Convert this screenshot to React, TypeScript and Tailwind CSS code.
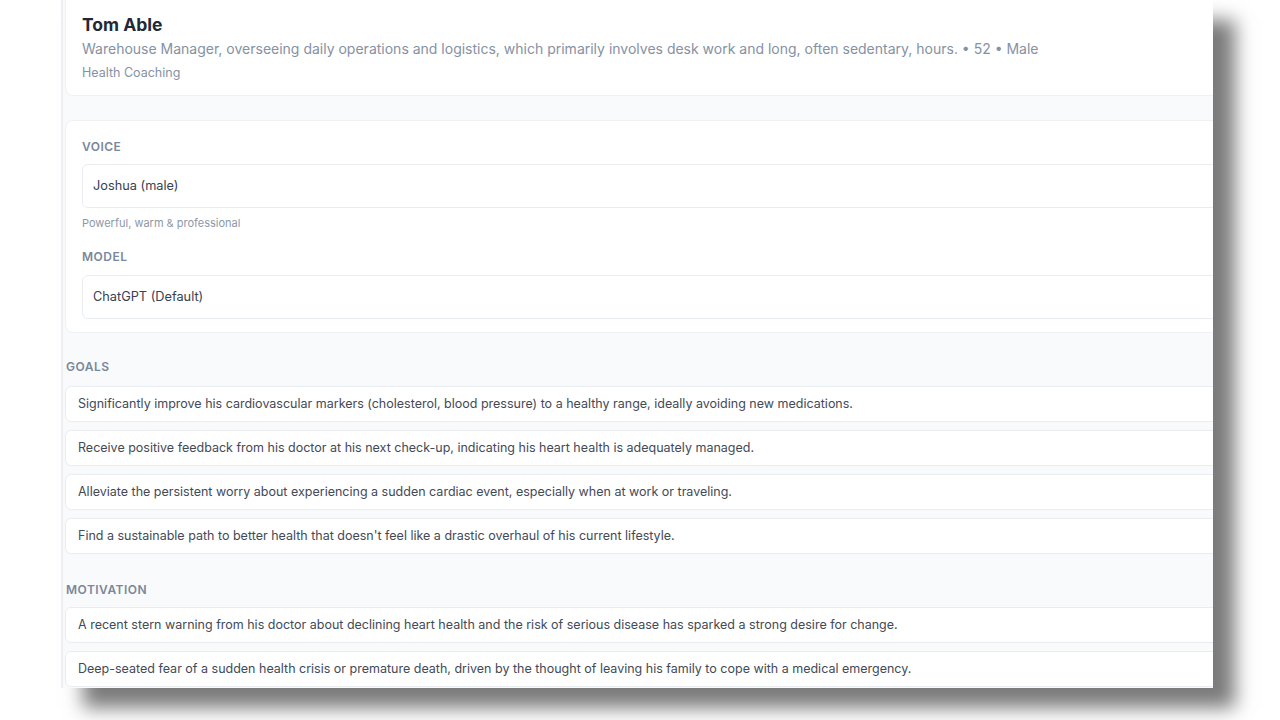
const goals = [
  "Significantly improve his cardiovascular markers (cholesterol, blood pressure) to a healthy range, ideally avoiding new medications.",
  "Receive positive feedback from his doctor at his next check-up, indicating his heart health is adequately managed.",
  "Alleviate the persistent worry about experiencing a sudden cardiac event, especially when at work or traveling.",
  "Find a sustainable path to better health that doesn't feel like a drastic overhaul of his current lifestyle.",
];

const motivation = [
  "A recent stern warning from his doctor about declining heart health and the risk of serious disease has sparked a strong desire for change.",
  "Deep-seated fear of a sudden health crisis or premature death, driven by the thought of leaving his family to cope with a medical emergency.",
];

const Label = ({ children, className = "" }: { children: React.ReactNode; className?: string }) => (
  <div className={`text-[12px] font-semibold uppercase leading-4 tracking-[0.04em] text-[#7a879c] ${className}`}>
    {children}
  </div>
);

const Field = ({ value, className = "" }: { value: string; className?: string }) => (
  <div className={`flex h-[44px] items-center rounded-md border border-[#e9edf2] bg-white px-[10px] text-[12.75px] text-[#374151] ${className}`}>
    {value}
  </div>
);

const Item = ({ text }: { text: string }) => (
  <div className="flex h-[36px] items-center rounded-md border border-[#e9edf2] bg-white px-3 text-[12.5px] text-[#434a57]">
    {text}
  </div>
);

export default function App() {
  return (
    <div className="h-screen w-full overflow-hidden bg-white font-['Inter','Liberation_Sans',sans-serif]">
      <div className="ml-[61px] h-[688px] w-[1152px] overflow-hidden border-l-2 border-[#eceef1] bg-[#f9fafb] shadow-[22px_20px_18px_rgba(0,0,0,0.52)]">
        <div className="w-[1200px] pl-[2px]">
          {/* persona header */}
          <div className="-mt-2 rounded-lg border border-[#eef0f3] bg-white px-4 pb-[14px] pt-[20px]">
            <h1 className="text-[17.5px] font-bold leading-6 text-[#1f2937]">Tom Able</h1>
            <p className="mt-0.5 text-[14px] leading-5 text-[#8591a4]">
              Warehouse Manager, overseeing daily operations and logistics, which primarily involves desk work and long, often sedentary, hours. • 52 • Male
            </p>
            <p className="mt-1.5 text-[12.5px] leading-4 text-[#8591a4]">Health Coaching</p>
          </div>

          {/* voice / model */}
          <div className="mt-6 rounded-lg border border-[#eef0f3] bg-white px-4 pb-[13px] pt-[18px]">
            <Label>Voice</Label>
            <Field value="Joshua (male)" className="mt-[9px]" />
            <p className="mt-2 text-[11px] leading-[14px] text-[#8c97a8]">Powerful, warm &amp; professional</p>
            <Label className="mt-[19px]">Model</Label>
            <Field value="ChatGPT (Default)" className="mt-[10px]" />
          </div>

          {/* goals */}
          <Label className="ml-px mt-[26px]">Goals</Label>
          <div className="mt-[11px] flex flex-col gap-2">
            {goals.map((g) => (
              <Item key={g} text={g} />
            ))}
          </div>

          {/* motivation */}
          <Label className="ml-px mt-[28px]">Motivation</Label>
          <div className="mt-[9px] flex flex-col gap-2">
            {motivation.map((m) => (
              <Item key={m} text={m} />
            ))}
          </div>
        </div>
      </div>
    </div>
  );
}
